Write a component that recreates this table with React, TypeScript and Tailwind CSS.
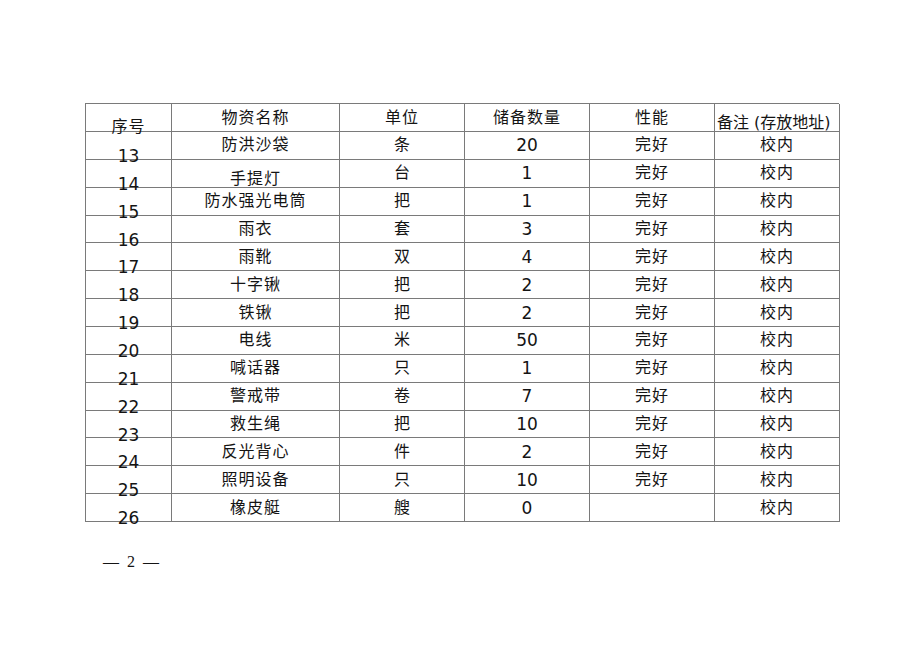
const rows: [string, string, string, string, string, string][] = [
  ["13", "防洪沙袋", "条", "20", "完好", "校内"],
  ["14", "手提灯", "台", "1", "完好", "校内"],
  ["15", "防水强光电筒", "把", "1", "完好", "校内"],
  ["16", "雨衣", "套", "3", "完好", "校内"],
  ["17", "雨靴", "双", "4", "完好", "校内"],
  ["18", "十字锹", "把", "2", "完好", "校内"],
  ["19", "铁锹", "把", "2", "完好", "校内"],
  ["20", "电线", "米", "50", "完好", "校内"],
  ["21", "喊话器", "只", "1", "完好", "校内"],
  ["22", "警戒带", "卷", "7", "完好", "校内"],
  ["23", "救生绳", "把", "10", "完好", "校内"],
  ["24", "反光背心", "件", "2", "完好", "校内"],
  ["25", "照明设备", "只", "10", "完好", "校内"],
  ["26", "橡皮艇", "艘", "0", "", "校内"],
];

const cell = "border-r border-b border-[#7a7a7a] flex justify-center";

export default function App() {
  return (
    <div
      className="w-[920px] h-[651px] bg-white text-[#141414] pt-[103px] pl-[85px] leading-[20px]"
      style={{ fontFamily: '"DejaVu Sans", "Noto Sans CJK SC", sans-serif' }}
    >
      <div className="w-[754px] grid grid-cols-[86px_168px_125px_125px_125px_125px] border-l border-t border-[#7a7a7a]">
        {/* 表头 */}
        <div className={`${cell} h-[28px] items-start pt-[13px] text-[16px] tracking-[1px]`}>序号</div>
        <div className={`${cell} h-[28px] items-center text-[16px] tracking-[1px]`}>物资名称</div>
        <div className={`${cell} h-[28px] items-center text-[16px] tracking-[1px]`}>单位</div>
        <div className={`${cell} h-[28px] items-center text-[16px] tracking-[1px]`}>储备数量</div>
        <div className={`${cell} h-[28px] items-center text-[16px] tracking-[1px]`}>性能</div>
        <div className="border-r border-b border-[#7a7a7a] h-[28px] flex items-start justify-start pl-[2px] pt-[9px] text-[16px] whitespace-nowrap">
          备注 (存放地址)
        </div>

        {rows.map((r) => (
          <div key={r[0]} className="contents">
            <div className={`${cell} h-[27.86px] items-start pt-[14px] text-[17px]`}>{r[0]}</div>
            <div
              className={`${cell} h-[27.86px] items-center text-[16px] tracking-[1px] ${
                r[0] === "14" ? "pt-[12px]" : ""
              }`}
            >
              {r[1]}
            </div>
            <div className={`${cell} h-[27.86px] items-center text-[16px]`}>{r[2]}</div>
            <div className={`${cell} h-[27.86px] items-center text-[17px]`}>{r[3]}</div>
            <div className={`${cell} h-[27.86px] items-center text-[16px] tracking-[1px]`}>{r[4]}</div>
            <div className={`${cell} h-[27.86px] items-center text-[16px] tracking-[1px]`}>{r[5]}</div>
          </div>
        ))}
      </div>

      <div
        className="mt-[30px] pl-[18px] text-[16px] tracking-[2px]"
        style={{ fontFamily: '"Liberation Serif", serif' }}
      >
        — 2 —
      </div>
    </div>
  );
}
